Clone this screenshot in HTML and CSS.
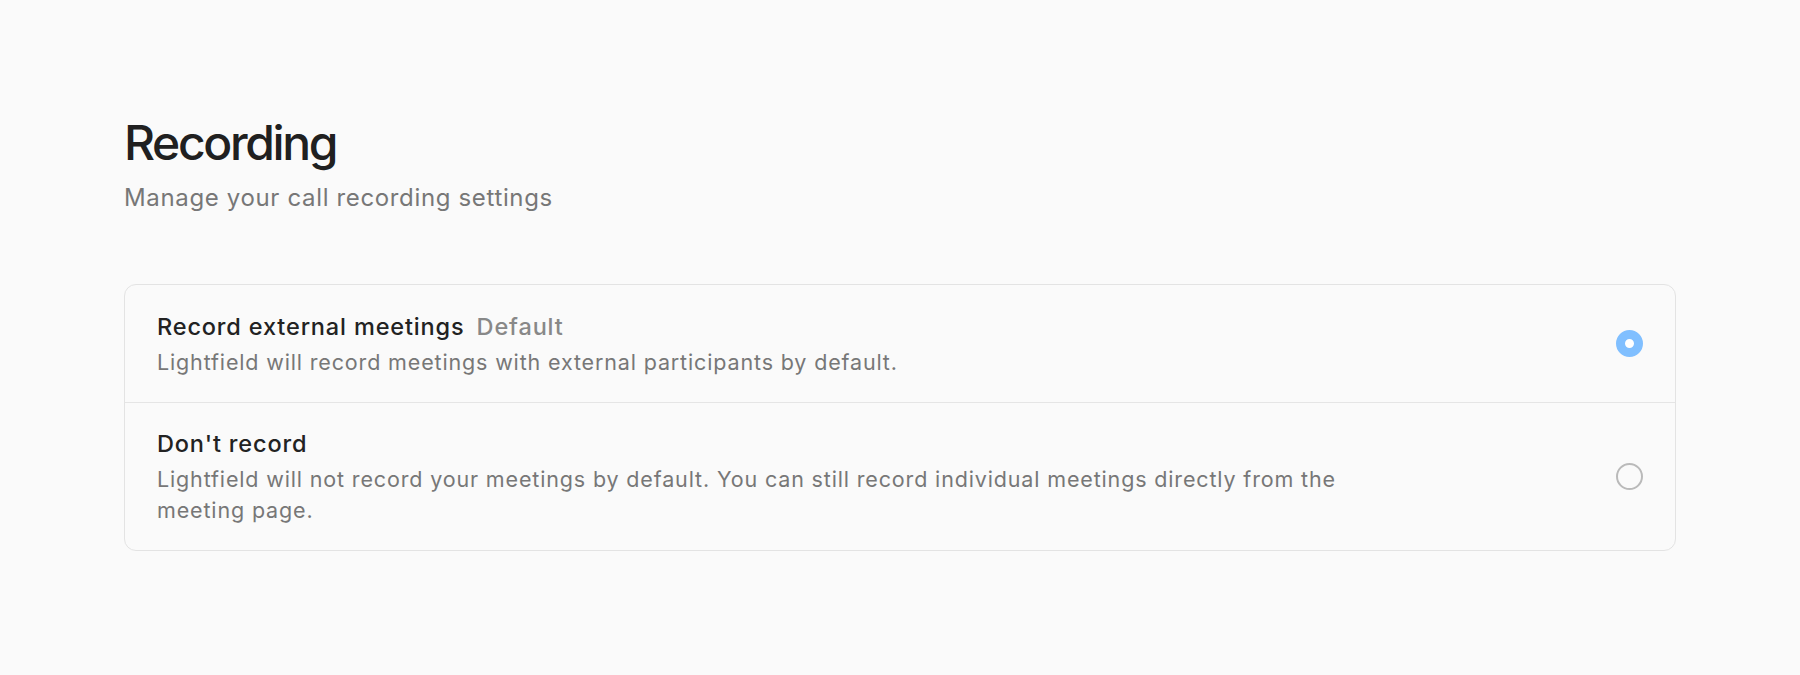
FILE: index.html
```html
<!DOCTYPE html>
<html lang="en">
<head>
<meta charset="utf-8">
<title>Recording</title>
<link rel="stylesheet" href="styles.css">
</head>
<body>
<main class="page">
  <header class="page-header">
    <h1 class="page-title">Recording</h1>
    <p class="page-subtitle">Manage your call recording settings</p>
  </header>
  <section class="options">
    <label class="option">
      <div class="option-text">
        <div class="option-title">Record external meetings <span class="option-tag">Default</span></div>
        <div class="option-desc">Lightfield will record meetings with external participants by default.</div>
      </div>
      <span class="radio radio-checked"></span>
    </label>
    <label class="option">
      <div class="option-text">
        <div class="option-title">Don't record</div>
        <div class="option-desc">Lightfield will not record your meetings by default. You can still record individual meetings directly from the meeting page.</div>
      </div>
      <span class="radio"></span>
    </label>
  </section>
</main>
</body>
</html>
```

FILE: styles.css
```css
* { box-sizing: border-box; }
html, body { margin: 0; padding: 0; }
body {
  background: #fafafa;
  font-family: Inter, "Noto Sans", sans-serif;
  color: #222;
}
.page {
  padding: 114px 124px 0;
}
.page-header { margin-bottom: 69px; }
.page-title {
  margin: 0;
  font-size: 48px;
  line-height: 58px;
  font-weight: 500;
  color: #202020;
  letter-spacing: -2.35px;
}
.page-subtitle {
  margin: 9px 0 0;
  font-size: 24px;
  line-height: 34px;
  color: #777;
  letter-spacing: 0.65px;
}
.options {
  border: 1px solid #e3e3e3;
  border-radius: 12px;
  background: #fafafa;
}
.option {
  display: flex;
  align-items: center;
  justify-content: space-between;
  padding: 24px 32px 24px;
}
.option + .option { border-top: 1px solid #e5e5e5; }
.option + .option { padding-top: 23px; }
.option-text { max-width: 1200px; }
.option-title {
  font-size: 23.5px;
  line-height: 35px;
  font-weight: 500;
  color: #222;
  letter-spacing: 0.85px;
  margin-bottom: 3px;
}
.option-tag {
  margin-left: 5px;
  color: #888;
  font-weight: 500;
}
.option-desc {
  font-size: 21.5px;
  line-height: 31px;
  color: #777;
  letter-spacing: 0.85px;
}
.radio {
  flex: none;
  width: 27px;
  height: 27px;
  border-radius: 50%;
  border: 2px solid #bababa;
}
.radio-checked {
  border: 9.5px solid #80bfff;
  background: #fff;
}
```
